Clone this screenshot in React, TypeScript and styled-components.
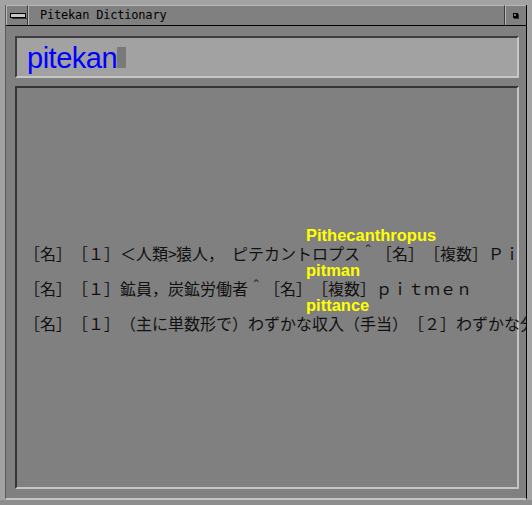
import React from "react";
import styled, { createGlobalStyle } from "styled-components";

const GlobalStyle = createGlobalStyle`
  html, body {
    margin: 0;
    padding: 0;
    background: #808080;
  }
  body {
    width: 532px;
    height: 505px;
    overflow: hidden;
  }
`;

interface Entry {
  word: string;
  def: React.ReactNode;
}

const Half = styled.span`
  display: inline-block;
  width: 8px;
  text-align: center;
`;

const entries: Entry[] = [
  {
    word: "Pithecanthropus",
    def: (
      <>
        ［名］［１］＜人類<Half>&gt;</Half>猿人，<Half />ピテカントロプス＾［名］［複数］Ｐｉ
      </>
    ),
  },
  {
    word: "pitman",
    def: <>［名］［１］鉱員，炭鉱労働者＾［名］［複数］ｐｉｔｍｅｎ</>,
  },
  {
    word: "pittance",
    def: <>［名］［１］（主に単数形で）わずかな収入（手当）［２］わずかな分け前</>,
  },
];

const App = () => {
  return (
    <>
      <GlobalStyle />
      <Window>
        <Frame>
          <TitleBar>
            <MenuButton>
              <svg width="17" height="6" viewBox="0 0 17 6">
                <rect x="0.5" y="0.5" width="15" height="4" fill="#c6c6c6" stroke="#000" />
                <rect x="2" y="5" width="15" height="1" fill="#303030" />
              </svg>
            </MenuButton>
            <TitleText>Pitekan Dictionary</TitleText>
            <IconButton>
              <svg width="6" height="6" viewBox="0 0 6 6">
                <rect x="0" y="0" width="5" height="5" fill="#000" />
                <rect x="1" y="1" width="2" height="2" fill="#7a7a7a" />
                <rect x="5" y="1" width="1" height="5" fill="#303030" />
                <rect x="1" y="5" width="5" height="1" fill="#303030" />
              </svg>
            </IconButton>
          </TitleBar>
          <Body>
            <SearchField>
              <Query>pitekan</Query>
              <Cursor />
            </SearchField>
            <Results>
              {entries.map((e) => (
                <EntryBlock key={e.word}>
                  <HeadWord>{e.word}</HeadWord>
                  <Definition>{e.def}</Definition>
                </EntryBlock>
              ))}
            </Results>
          </Body>
        </Frame>
      </Window>
    </>
  );
};

export default App;

const Window = styled.div`
  box-sizing: border-box;
  width: 532px;
  height: 505px;
  padding: 5px 5px 0 5px;
  background: #a3a3a3;
  border-bottom: 5px solid #8e8e8e;
  display: flex;
  flex-direction: column;
`;

const Frame = styled.div`
  flex: 1;
  display: flex;
  flex-direction: column;
  background: #808080;
  border-left: 1px solid #5a5a5a;
  border-right: 1px solid #000;
  border-bottom: 2px solid #c4c4c4;
  overflow: hidden;
`;

const TitleBar = styled.div`
  display: flex;
  height: 20px;
  border-bottom: 1px solid #000;
  background: #808080;
`;

const MenuButton = styled.div`
  box-sizing: border-box;
  width: 22px;
  display: flex;
  align-items: center;
  justify-content: center;
  padding-left: 2px;
  border-top: 1px solid #b8b8b8;
  border-left: 1px solid #b8b8b8;
  border-right: 1px solid #3a3a3a;
`;

const TitleText = styled.div`
  box-sizing: border-box;
  flex: 1;
  padding-left: 11px;
  border-top: 1px solid #b8b8b8;
  border-left: 1px solid #b8b8b8;
  border-right: 1px solid #3a3a3a;
  font-family: "DejaVu Sans Mono", "Liberation Mono", monospace;
  font-size: 12px;
  letter-spacing: -0.2px;
  line-height: 19px;
  color: #000;
`;

const IconButton = styled.div`
  box-sizing: border-box;
  width: 21px;
  display: flex;
  align-items: flex-start;
  justify-content: center;
  padding-top: 7px;
  border-top: 1px solid #b8b8b8;
  border-left: 1px solid #b8b8b8;
`;

const Body = styled.div`
  flex: 1;
  display: flex;
  flex-direction: column;
  gap: 8px;
  padding: 10px 7px 9px 9px;
`;

const SearchField = styled.div`
  box-sizing: border-box;
  height: 42px;
  display: flex;
  align-items: flex-start;
  padding: 4px 0 0 10px;
  background: #a2a2a2;
  border-top: 2px solid #3e3e3e;
  border-left: 2px solid #3e3e3e;
  border-bottom: 2px solid #c6c6c6;
  border-right: 2px solid #c6c6c6;
`;

const Query = styled.span`
  font-family: "Liberation Sans", Arial, sans-serif;
  font-size: 29px;
  letter-spacing: -0.5px;
  line-height: 33px;
  color: #0000ff;
`;

const Cursor = styled.span`
  width: 9px;
  height: 21px;
  margin-top: 5px;
  background: #7a7a7a;
`;

const Results = styled.div`
  flex: 1;
  box-sizing: border-box;
  padding: 138px 0 0 7px;
  border-top: 2px solid #353535;
  border-left: 2px solid #353535;
  border-bottom: 2px solid #c4c4c4;
  border-right: 2px solid #c4c4c4;
  background: #808080;
`;

const EntryBlock = styled.div`
  display: flex;
  flex-direction: column;
`;

const HeadWord = styled.div`
  margin-left: 282px;
  font-family: "Liberation Sans", Arial, sans-serif;
  font-weight: 700;
  font-size: 16.5px;
  line-height: 19px;
  color: #ffff00;
`;

const Definition = styled.div`
  font-family: "Noto Sans CJK JP", "Noto Sans", sans-serif;
  font-size: 16px;
  line-height: 16px;
  white-space: nowrap;
  text-spacing-trim: space-all;
  font-kerning: none;
  color: #111;
`;
